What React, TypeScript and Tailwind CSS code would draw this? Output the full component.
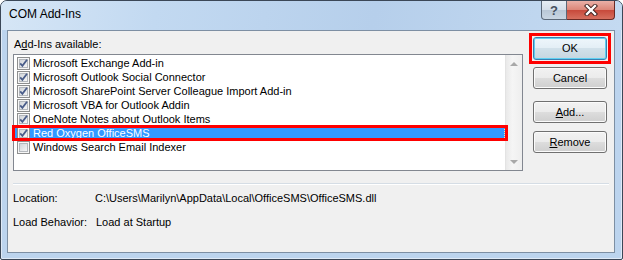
import React from 'react';

const addins = [
  { name: 'Microsoft Exchange Add-in', checked: true },
  { name: 'Microsoft Outlook Social Connector', checked: true },
  { name: 'Microsoft SharePoint Server Colleague Import Add-in', checked: true },
  { name: 'Microsoft VBA for Outlook Addin', checked: true },
  { name: 'OneNote Notes about Outlook Items', checked: true },
  { name: 'Red Oxygen OfficeSMS', checked: true, selected: true },
  { name: 'Windows Search Email Indexer', checked: false },
];

const CheckBox: React.FC<{ checked: boolean }> = ({ checked }) => (
  <svg width="13" height="13" viewBox="0 0 13 13" className="shrink-0">
    <defs>
      <linearGradient id="cbfill" x1="0" y1="0" x2="1" y2="1">
        <stop offset="0" stopColor="#cfd3d8" />
        <stop offset="1" stopColor="#f8f8f8" />
      </linearGradient>
    </defs>
    <rect x="0.5" y="0.5" width="12" height="12" fill="#f6f6f6" stroke="#8e8f8f" />
    <rect x="2.5" y="2.5" width="8" height="8" fill="url(#cbfill)" stroke="#b4b8bd" />
    {checked && (
      <path d="M3.2 6.4 L5.4 8.9 L10 2.8" fill="none" stroke="#4a5d8a" strokeWidth="1.8" />
    )}
  </svg>
);

const Btn: React.FC<{ children: React.ReactNode; primary?: boolean }> = ({ children, primary }) => (
  <div
    className={`w-[74px] flex items-center justify-center rounded-[3px] border text-[11px] text-black ${
      primary
        ? 'h-[23px] border-[#3c7fb1] shadow-[inset_0_0_0_1px_#5fd0f2] bg-[linear-gradient(#eef6fb_0%,#e3eef5_50%,#d2e1ea_50%,#c6d6e0_100%)]'
        : 'h-[22px] border-[#707070] shadow-[inset_0_0_0_1px_#fbfbfb] bg-[linear-gradient(#f2f2f2_0%,#ebebeb_50%,#dddddd_50%,#cfcfcf_100%)]'
    }`}
  >
    {children}
  </div>
);

export default function App() {
  return (
    <div className="w-[623px] h-[260px] bg-white font-['Liberation_Sans',Arial,sans-serif]">
      <div className="w-[623px] h-[260px] flex flex-col rounded-t-[7px] rounded-b-[2px] border border-[#3b4757] bg-[#bcd4ee] shadow-[inset_0_0_0_1px_#dfeaf7] overflow-hidden">
        {/* title bar */}
        <div className="h-[29px] shrink-0 flex items-start bg-[linear-gradient(100deg,#d6e6f6_0%,#c2d9f1_25%,#b6cfeb_60%,#c4daf1_100%)]">
          <span className="pl-[8px] pt-[6px] text-[12px] leading-[15px] text-black">COM Add-Ins</span>
          <div className="ml-auto mr-[7px] flex">
            <div className="w-[26px] h-[19px] flex items-center justify-center rounded-bl-[4px] border border-t-0 border-[#5b6878] bg-[linear-gradient(#e6edf4_0%,#d4dee9_50%,#b9c7d6_50%,#c9d6e3_100%)]">
              <span className="text-[13px] font-bold leading-none text-[#46505e]">?</span>
            </div>
            <div className="w-[48px] h-[19px] flex items-center justify-center rounded-br-[4px] border border-t-0 border-l-0 border-[#6b2a24] bg-[linear-gradient(#eab0a7_0%,#dc8577_50%,#c7483a_50%,#d6705f_100%)]">
              <svg width="14" height="12" viewBox="0 0 14 12">
                <path d="M3 2 L11 10 M11 2 L3 10" stroke="#3a1d1a" strokeWidth="4.2" strokeLinecap="square" />
                <path d="M3 2 L11 10 M11 2 L3 10" stroke="#ffffff" strokeWidth="2.4" strokeLinecap="square" />
              </svg>
            </div>
          </div>
        </div>

        {/* client area */}
        <div className="ml-[6px] mr-[7px] mb-[6px] flex-1 flex flex-col border border-[#7d8fa3] bg-[#f0f0f0] text-[11px] text-black">
          <div className="flex items-start">
            <div className="pl-[5px] pt-[6px]">
              <div className="h-[14px] leading-[14px] pl-px">
                A<span className="underline">d</span>d-Ins available:
              </div>
              <div className="mt-[3px] w-[510px] h-[117px] flex border border-[#828790] bg-white">
                <div className="flex-1 pt-px">
                  {addins.map((a) => (
                    <div
                      key={a.name}
                      className={`relative h-[14px] flex items-center gap-[3px] pl-[3px] leading-[14px] ${
                        a.selected ? 'bg-[#3399ff] text-white' : ''
                      }`}
                    >
                      <CheckBox checked={a.checked} />
                      <span>{a.name}</span>
                      {a.selected && (
                        <>
                          <div className="absolute inset-0 border border-dotted border-[#ffe2a8]" />
                          <div className="absolute -left-[2px] -right-[3px] -top-px -bottom-px border-[3px] border-[#ff0000]" />
                        </>
                      )}
                    </div>
                  ))}
                </div>
                <div className="w-[17px] flex flex-col justify-between border-l border-[#e3e3e3] bg-[linear-gradient(90deg,#e9e9e9,#f5f5f5_40%,#eeeeee)]">
                  <div className="h-[17px] flex items-center justify-center">
                    <div className="w-0 h-0 border-l-[4px] border-r-[4px] border-b-[4px] border-l-transparent border-r-transparent border-b-[#a8a8a8]" />
                  </div>
                  <div className="h-[17px] flex items-center justify-center">
                    <div className="w-0 h-0 border-l-[4px] border-r-[4px] border-t-[4px] border-l-transparent border-r-transparent border-t-[#a8a8a8]" />
                  </div>
                </div>
              </div>
            </div>

            <div className="ml-[6px] mt-[2px] w-[82px] flex flex-col items-center">
              <div className="border-[3px] border-[#ff0000] p-px">
                <Btn primary>OK</Btn>
              </div>
              <div className="mt-[3px]">
                <Btn>Cancel</Btn>
              </div>
              <div className="mt-[12px]">
                <Btn>
                  <span className="underline">A</span>dd...
                </Btn>
              </div>
              <div className="mt-[8px]">
                <Btn>
                  <span className="underline">R</span>emove
                </Btn>
              </div>
            </div>
          </div>

          <div className="mt-[12px] mx-[5px] h-px bg-[#d5dde5] shadow-[0_1px_0_#ffffff]" />

          <div className="mt-[7px] pl-[5px] grid grid-cols-[82px_1fr] gap-y-[10px] leading-[14px]">
            <span>Location:</span>
            <span>C:\Users\Marilyn\AppData\Local\OfficeSMS\OfficeSMS.dll</span>
            <span>Load Behavior:</span>
            <span className="pl-px">Load at Startup</span>
          </div>
        </div>
      </div>
    </div>
  );
}
